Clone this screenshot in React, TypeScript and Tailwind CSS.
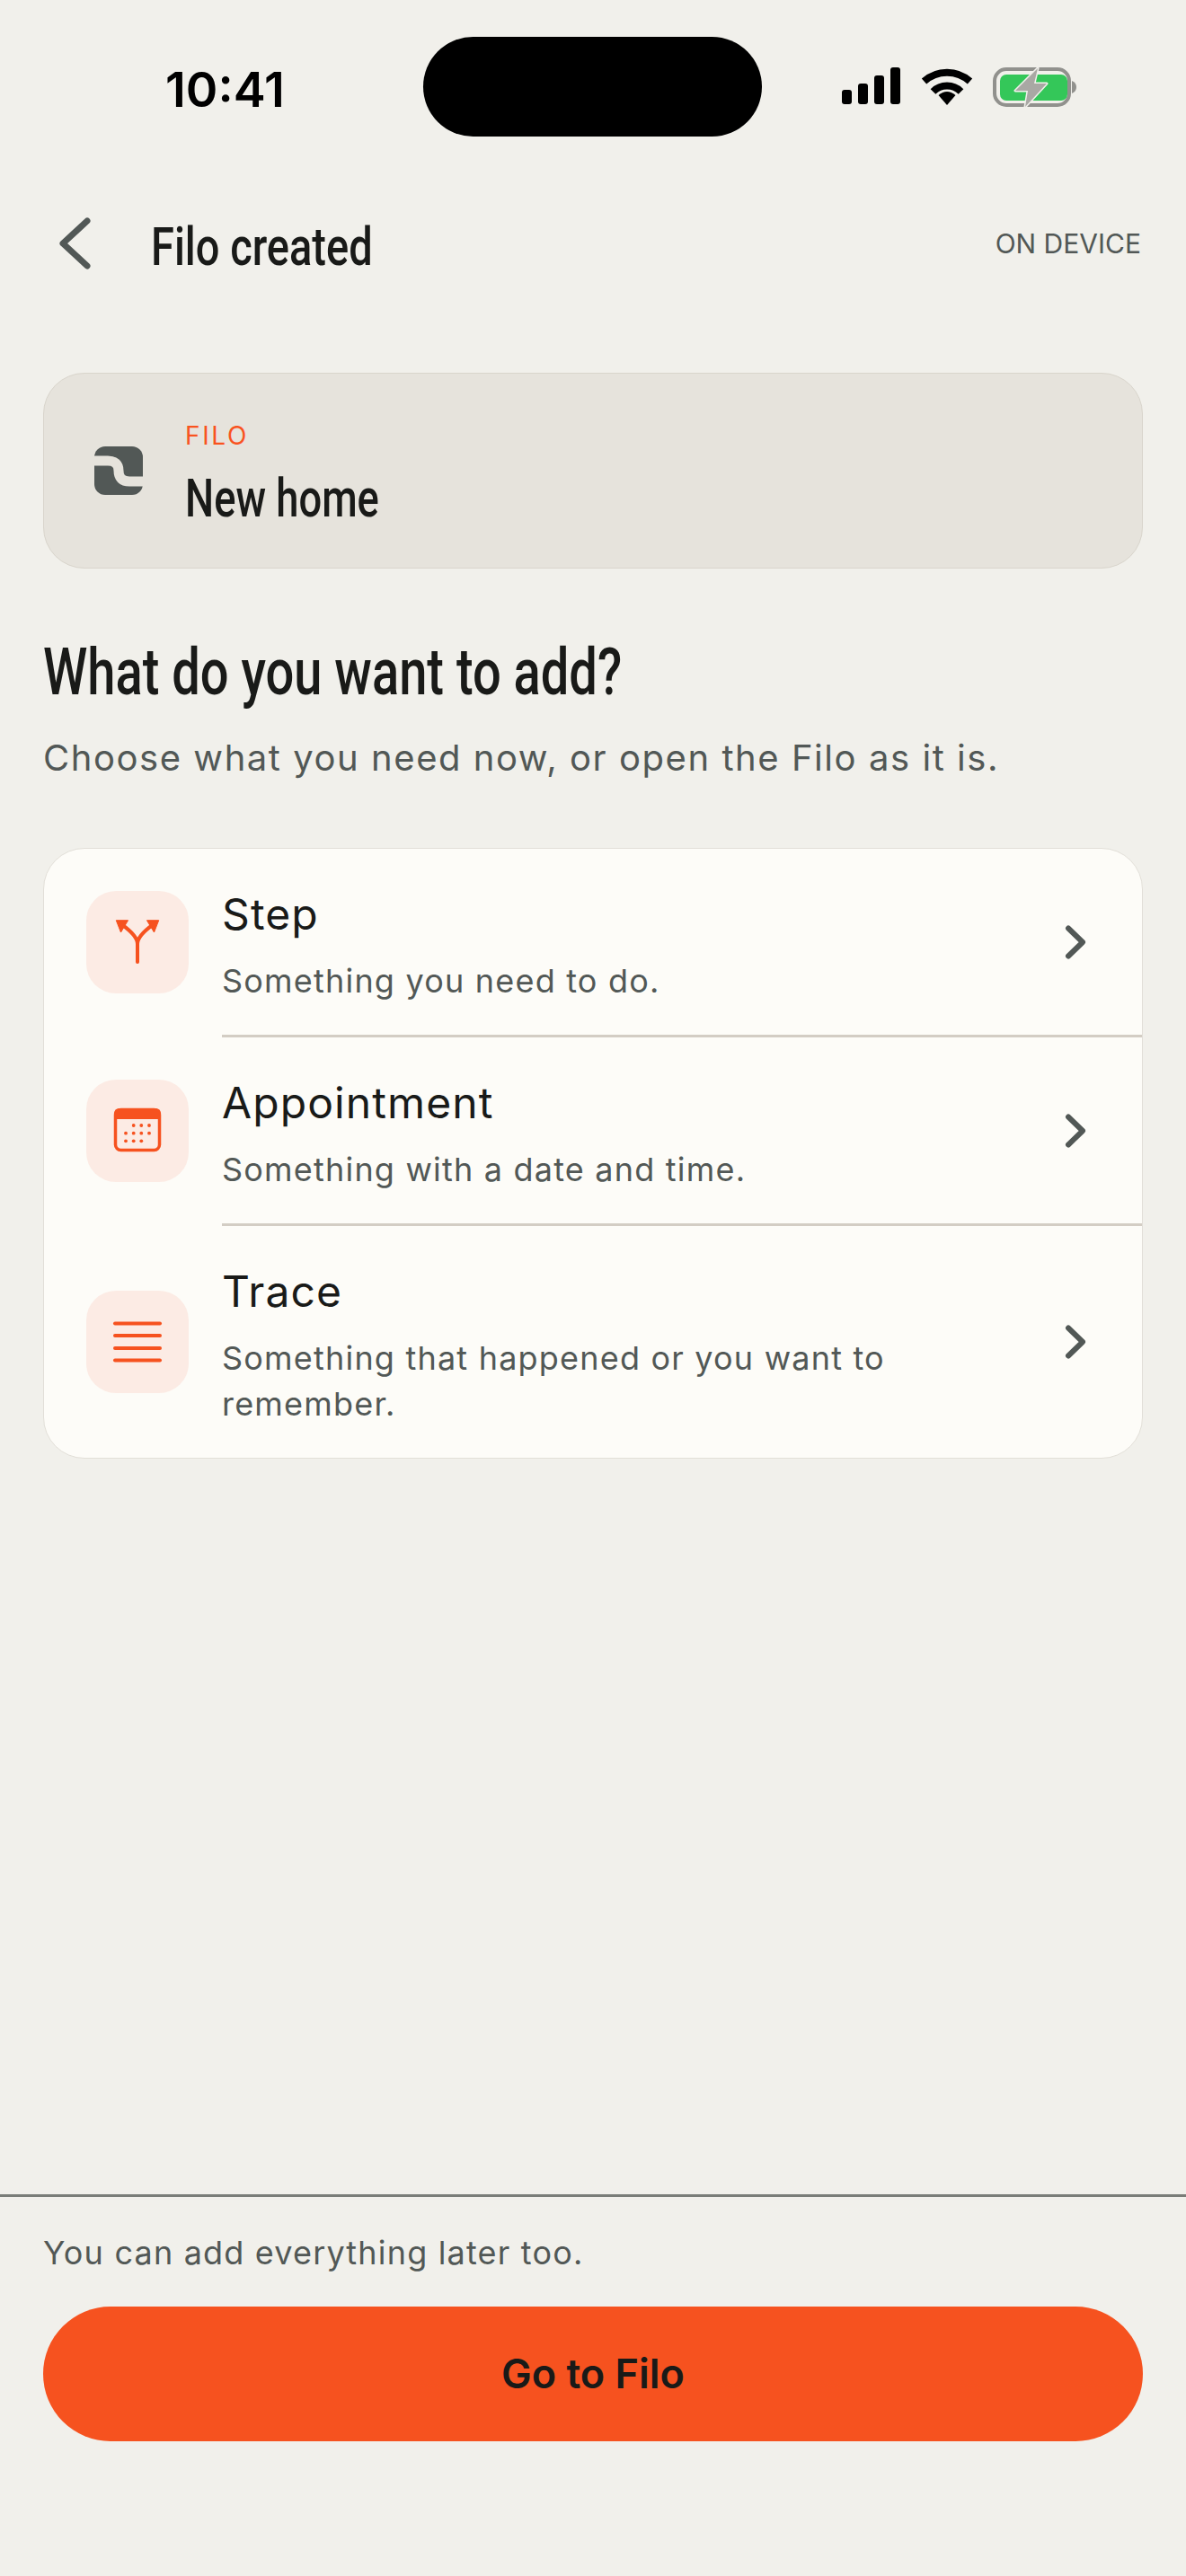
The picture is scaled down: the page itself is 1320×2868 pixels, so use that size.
import React from "react";

const ORANGE = "#f6521f";

function Signal() {
  return (
    <svg width="66" height="42" viewBox="0 0 66 42" fill="#000">
      <rect x="0" y="25" width="11" height="16" rx="3" />
      <rect x="18" y="18" width="11" height="23" rx="3" />
      <rect x="36" y="9" width="11" height="32" rx="3" />
      <rect x="54" y="0" width="11" height="41" rx="3" />
    </svg>
  );
}

function Wifi() {
  return (
    <svg width="58" height="43" viewBox="0 0 58 43" fill="none" stroke="#000" strokeWidth="8">
      <path d="M3.5 15.5 A 38 38 0 0 1 54.5 15.5" />
      <path d="M13.5 27 A 22 22 0 0 1 44.5 27" />
      <path d="M29 42 L19.5 31 Q29 23 38.5 31 Z" fill="#000" stroke="none" />
    </svg>
  );
}

function Battery() {
  return (
    <svg width="94" height="46" viewBox="0 0 94 46" fill="none">
      <rect x="2" y="2" width="83" height="40" rx="13" stroke="#91918d" strokeWidth="4" />
      <rect x="8" y="8" width="75" height="29" rx="7" fill="#34c759" />
      <path d="M88 15 Q93 17 93 22 Q93 27 88 29 Z" fill="#91918d" />
      <path
        d="M50 1 L25 26 L39 26 L36 44 L60 18 L46 18 Z"
        fill="#a9a8a4"
        stroke="#f1f0eb"
        strokeWidth="3"
        strokeLinejoin="round"
        paintOrder="stroke"
      />
    </svg>
  );
}

function BackChevron() {
  return (
    <svg width="36" height="58" viewBox="0 0 36 58" fill="none" stroke="#525856" strokeWidth="7" strokeLinecap="round" strokeLinejoin="round">
      <path d="M31 4 L4 29 L31 54" />
    </svg>
  );
}

function RowChevron() {
  return (
    <svg width="24" height="38" viewBox="0 0 24 38" fill="none" stroke="#525856" strokeWidth="6" strokeLinecap="round" strokeLinejoin="round">
      <path d="M4 3.5 L20 19 L4 34.5" />
    </svg>
  );
}

function FiloLogo() {
  return (
    <svg width="54" height="54" viewBox="0 0 54 54" fill="none">
      <rect x="0" y="0" width="54" height="54" rx="12" fill="#525856" />
      <path d="M0 16 H15 C23 16 27 20 27 27 C27 35 31 39 39 39 H54" stroke="#e6e3dc" strokeWidth="11" />
    </svg>
  );
}

function StepIcon() {
  return (
    <svg width="60" height="60" viewBox="0 0 60 60" fill="none">
      <g stroke={ORANGE} strokeWidth="4" strokeLinecap="round">
        <path d="M30 52 V32" />
        <path d="M30 32 C30 25 22 17 12 10" />
        <path d="M30 32 C30 25 38 17 48 10" />
      </g>
      <path d="M6.3 5.7 L19.5 5.7 L11.5 19 Z" fill={ORANGE} stroke={ORANGE} strokeWidth="1" strokeLinejoin="round" />
      <path d="M53.7 5.7 L40.5 5.7 L48.5 19 Z" fill={ORANGE} stroke={ORANGE} strokeWidth="1" strokeLinejoin="round" />
    </svg>
  );
}

function CalendarIcon() {
  const dots = [
    [25.7, 24], [34.3, 24], [43, 24],
    [17, 32.7], [25.7, 32.7], [34.3, 32.7], [43, 32.7],
    [17, 41.3], [25.7, 41.3], [34.3, 41.3],
  ];
  return (
    <svg width="60" height="60" viewBox="0 0 60 60" fill="none">
      <rect x="5.5" y="6.5" width="49" height="45" rx="6" stroke={ORANGE} strokeWidth="3.5" />
      <path d="M4 17 V11 Q4 5 10 5 H50 Q56 5 56 11 V17 Z" fill={ORANGE} />
      {dots.map(([x, y], i) => (
        <circle key={i} cx={x} cy={y} r="1.9" fill={ORANGE} />
      ))}
    </svg>
  );
}

function TraceIcon() {
  return (
    <svg width="60" height="60" viewBox="0 0 60 60" fill="none" stroke={ORANGE} strokeWidth="4" strokeLinecap="round">
      <path d="M5 9.5 H55" />
      <path d="M5 23 H55" />
      <path d="M5 37 H55" />
      <path d="M5 50.5 H55" />
    </svg>
  );
}

function Row({ icon, title, sub }: { icon: React.ReactNode; title: string; sub: string }) {
  return (
    <div className="flex items-center pl-[47px] pr-[62px]">
      <div className="flex h-[114px] w-[114px] shrink-0 items-center justify-center rounded-[33px] bg-[#fcebe4]">{icon}</div>
      <div className="ml-[37px] flex-1 pt-[44px] pb-[34px]">
        <div className="text-[48px] leading-[58px] font-normal tracking-[1.1px] text-[#191a18]">{title}</div>
        <div className="mt-[20px] w-[760px] text-[36px] leading-[51px] tracking-[1.2px] text-[#525856]">{sub}</div>
      </div>
      <RowChevron />
    </div>
  );
}

function Divider() {
  return <div className="ml-[198px] h-[3px] bg-[#d3cdc4]" />;
}

export default function App() {
  return (
    <div className="flex h-[2868px] w-[1320px] flex-col bg-[#f1f0eb] font-['Inter',sans-serif] text-[#191a18]">
      {/* Status bar */}
      <div className="flex items-start pt-[41px]">
        <div className="mt-[26px] ml-[184px] w-[287px] text-[54px] leading-[65px] font-semibold text-black">10:41</div>
        <div className="h-[111px] w-[377px] rounded-[56px] bg-black" />
        <div className="mt-[34px] ml-[89px] flex items-start gap-[22px]">
          <Signal />
          <Wifi />
          <Battery />
        </div>
      </div>

      {/* Header */}
      <div className="mt-[84px] flex items-center pl-[66px] pr-[50px]">
        <BackChevron />
        <div className="ml-[66px] flex-1 pt-[9px]">
          <span className="inline-block origin-left scale-x-[0.783] font-['Roboto',sans-serif] text-[60px] leading-[60px] font-medium whitespace-nowrap">Filo created</span>
        </div>
        <div className="text-[30px] leading-[36px] text-[#525856]">ON DEVICE</div>
      </div>

      {/* Filo card */}
      <div className="mx-[48px] mt-[110px] flex h-[218px] items-center rounded-[46px] border border-[#d9d5cc] bg-[#e6e3dc] pl-[56px]">
        <FiloLogo />
        <div className="ml-[47px] pt-[4px]">
          <div className="text-[28px] leading-[34px] tracking-[2.6px] text-[#f9531f]">FILO</div>
          <div className="mt-[23px]">
            <span className="block origin-left scale-x-[0.755] font-['Roboto',sans-serif] text-[60px] leading-[60px] font-medium whitespace-nowrap">New home</span>
          </div>
        </div>
      </div>

      {/* Heading */}
      <div className="mx-[48px] mt-[76px]">
        <span className="block origin-left scale-x-[0.778] font-['Roboto',sans-serif] text-[72px] leading-[80px] font-medium whitespace-nowrap">What do you want to add?</span>
      </div>
      <div className="mx-[48px] mt-[27px] text-[40px] leading-[56px] tracking-[1.55px] text-[#525856]">Choose what you need now, or open the Filo as it is.</div>

      {/* List */}
      <div className="mx-[48px] mt-[72px] rounded-[46px] border border-[#e2dfd8] bg-[#fdfcf8]">
        <Row icon={<StepIcon />} title="Step" sub="Something you need to do." />
        <Divider />
        <Row icon={<CalendarIcon />} title="Appointment" sub="Something with a date and time." />
        <Divider />
        <Row icon={<TraceIcon />} title="Trace" sub="Something that happened or you want to remember." />
      </div>

      {/* Bottom */}
      <div className="mt-auto border-t-[3px] border-[#7a7d78] px-[48px] pt-[38px] pb-[150px]">
        <div className="text-[36px] leading-[48px] tracking-[1.18px] text-[#525856]">You can add everything later too.</div>
        <div className="mt-[36px] flex h-[150px] items-center justify-center rounded-[75px] bg-[#f6521f] text-[45px] font-semibold text-[#191a18]">Go to Filo</div>
      </div>
    </div>
  );
}
